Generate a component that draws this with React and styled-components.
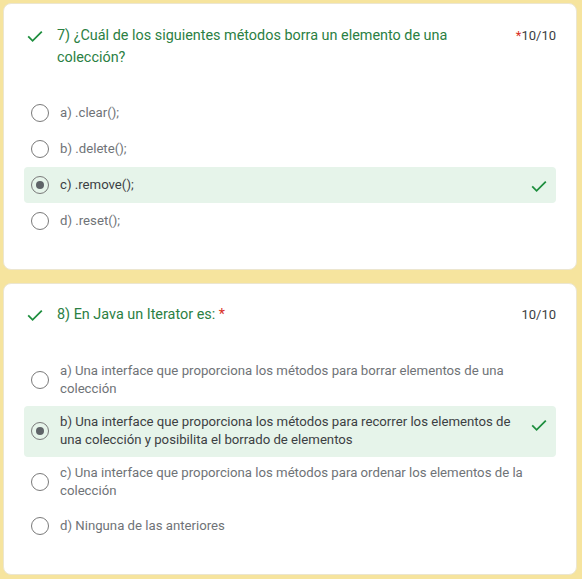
import React from "react";
import styled, { createGlobalStyle } from "styled-components";

const Global = createGlobalStyle`
  html, body { margin: 0; padding: 0; background: #f6e49e; }
  body { font-family: Roboto, "Noto Sans", Arial, sans-serif; }
`;

const Page = styled.div`
  display: flex;
  flex-direction: column;
  gap: 13px;
  padding: 3px 5px 4px 3px;
  width: 582px;
  box-sizing: border-box;
`;

const Card = styled.section`
  background: #ffffff;
  border-radius: 8px;
  border: 1px solid #ece6d0;
  padding: ${(p) => p.$pt}px 20px 30px 20px;
  display: flex;
  flex-direction: column;
  gap: ${(p) => p.$gap}px;
`;

const Header = styled.div`
  display: flex;
  align-items: flex-start;
`;

const HeaderIcon = styled.div`
  width: 33px;
  height: 22px;
  flex: none;
  display: flex;
  align-items: center;
  padding-left: 3px;
  box-sizing: border-box;
`;

const Title = styled.div`
  flex: 1;
  font-size: 14.4px;
  line-height: 22px;
  color: #2b8043;
  padding-right: 40px;
`;

const Req = styled.span`
  color: #d93025;
`;

const Points = styled.div`
  flex: none;
  font-size: 13px;
  line-height: 22px;
  color: #3c4043;
`;

const Options = styled.div`
  display: flex;
  flex-direction: column;
`;

const Row = styled.div`
  display: flex;
  align-items: center;
  min-height: 36px;
  box-sizing: border-box;
  padding: 7px 9px 8px 7px;
  border-radius: 4px;
  background: ${(p) => (p.$correct ? "#e6f4ea" : "transparent")};
`;

const Radio = styled.span`
  width: 18px;
  height: 18px;
  flex: none;
  border-radius: 50%;
  border: 1.5px solid #7a7a7a;
  box-sizing: border-box;
  display: flex;
  align-items: center;
  justify-content: center;
  margin-right: 11px;
  &::after {
    content: "";
    width: 8px;
    height: 8px;
    border-radius: 50%;
    background: ${(p) => (p.$checked ? "#5f6368" : "transparent")};
  }
`;

const Label = styled.div`
  flex: 1;
  font-size: 13.2px;
  line-height: 18px;
  color: ${(p) => (p.$checked ? "#3c4043" : "#6f7377")};
  margin-right: 4px;
`;

const CheckSlot = styled.div`
  width: 16px;
  flex: none;
  align-self: flex-start;
  padding-top: 4px;
  height: 13px;
`;

const Check = () => (
  <svg width={16} height={13} viewBox="0 0 16 13" fill="none">
    <path d="M1.2 6.4 L5.6 10.8 L14.8 1.6" stroke="#1e8e3e" strokeWidth="1.8" />
  </svg>
);

const Option = ({ label, checked, correct }) => (
  <Row $correct={correct}>
    <Radio $checked={checked} />
    <Label $checked={checked}>{label}</Label>
    <CheckSlot>{correct && <Check />}</CheckSlot>
  </Row>
);

const questions = [
  {
    title: "7) ¿Cuál de los siguientes métodos borra un elemento de una colección?",
    reqInPoints: true,
    pt: 21,
    gap: 26,
    options: ["a) .clear();", "b) .delete();", "c) .remove();", "d) .reset();"],
    answer: 2,
  },
  {
    title: "8) En Java un Iterator es:",
    reqInPoints: false,
    pt: 20,
    gap: 29,
    options: [
      "a) Una interface que proporciona los métodos para borrar elementos de una colección",
      "b) Una interface que proporciona los métodos para recorrer los elementos de una colección y posibilita el borrado de elementos",
      "c) Una interface que proporciona los métodos para ordenar los elementos de la colección",
      "d) Ninguna de las anteriores",
    ],
    answer: 1,
  },
];

export default function App() {
  return (
    <>
      <Global />
      <Page>
        {questions.map((q, qi) => (
          <Card key={qi} $pt={q.pt} $gap={q.gap}>
            <Header>
              <HeaderIcon>
                <Check />
              </HeaderIcon>
              <Title>
                {q.title}
                {!q.reqInPoints && <Req> *</Req>}
              </Title>
              <Points>
                {q.reqInPoints && <Req>*</Req>}10/10
              </Points>
            </Header>
            <Options>
              {q.options.map((o, i) => (
                <Option key={i} label={o} checked={i === q.answer} correct={i === q.answer} />
              ))}
            </Options>
          </Card>
        ))}
      </Page>
    </>
  );
}
